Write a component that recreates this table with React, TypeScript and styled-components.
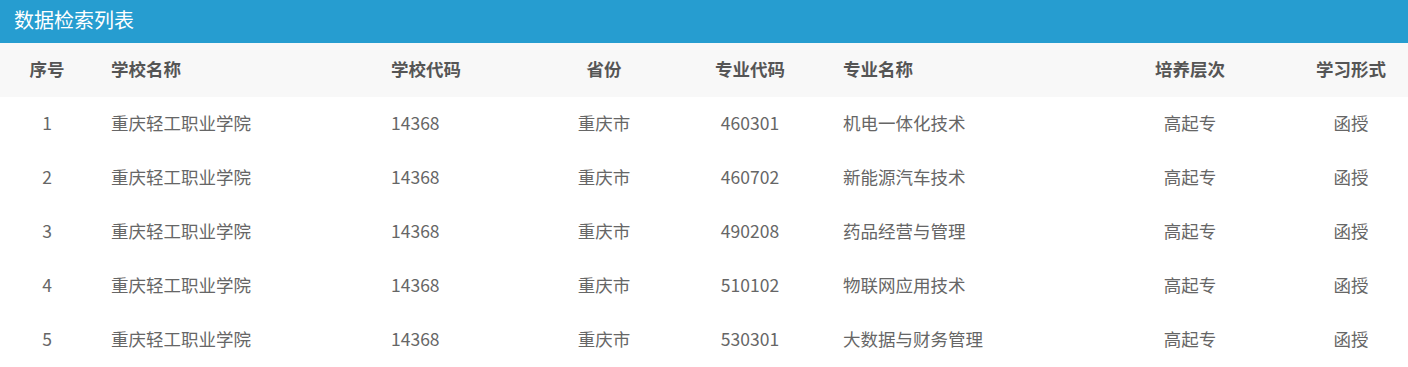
import React from 'react'
import styled, { createGlobalStyle } from 'styled-components'

const GlobalStyle = createGlobalStyle`
  html, body {
    margin: 0;
    padding: 0;
    background: #fff;
  }
  body {
    font-family: "Noto Sans CJK SC", "Noto Sans", sans-serif;
  }
`

const COLUMNS = '94px 280px 162px 136px 156px 258px 208px 114px'

const Panel = styled.div`
  width: 1408px;
  background: #fff;
`

const TitleBar = styled.div`
  height: 43px;
  box-sizing: border-box;
  background: #269dd0;
  color: #fff;
  font-size: 20px;
  line-height: 40px;
  padding-left: 14px;
`

const Row = styled.div<{ head?: boolean }>`
  display: grid;
  grid-template-columns: ${COLUMNS};
  height: 54px;
  box-sizing: border-box;
  padding-bottom: 4px;
  align-items: center;
  background: ${p => (p.head ? '#f8f8f8' : '#fff')};
  color: ${p => (p.head ? '#555' : '#666')};
  font-weight: ${p => (p.head ? 700 : 400)};
  font-size: 17.5px;
`

const Cell = styled.div<{ align: 'left' | 'center'; pad?: number }>`
  text-align: ${p => p.align};
  padding-left: ${p => p.pad ?? 0}px;
  white-space: nowrap;
`

const cols: { key: string; title: string; align: 'left' | 'center'; pad?: number }[] = [
  { key: 'no', title: '序号', align: 'center' },
  { key: 'school', title: '学校名称', align: 'left', pad: 17 },
  { key: 'code', title: '学校代码', align: 'left', pad: 17 },
  { key: 'prov', title: '省份', align: 'center' },
  { key: 'majorCode', title: '专业代码', align: 'center' },
  { key: 'major', title: '专业名称', align: 'left', pad: 15 },
  { key: 'level', title: '培养层次', align: 'center' },
  { key: 'form', title: '学习形式', align: 'center' }
]

const rows = [
  ['460301', '机电一体化技术'],
  ['460702', '新能源汽车技术'],
  ['490208', '药品经营与管理'],
  ['510102', '物联网应用技术'],
  ['530301', '大数据与财务管理']
].map(([majorCode, major], i) => ({
  no: String(i + 1),
  school: '重庆轻工职业学院',
  code: '14368',
  prov: '重庆市',
  majorCode,
  major,
  level: '高起专',
  form: '函授'
})) as Record<string, string>[]

export default function App() {
  return (
    <Panel>
      <GlobalStyle />
      <TitleBar>数据检索列表</TitleBar>
      <Row head>
        {cols.map(c => (
          <Cell key={c.key} align={c.align} pad={c.pad}>
            {c.title}
          </Cell>
        ))}
      </Row>
      {rows.map(r => (
        <Row key={r.no}>
          {cols.map(c => (
            <Cell key={c.key} align={c.align} pad={c.pad}>
              {r[c.key]}
            </Cell>
          ))}
        </Row>
      ))}
    </Panel>
  )
}
